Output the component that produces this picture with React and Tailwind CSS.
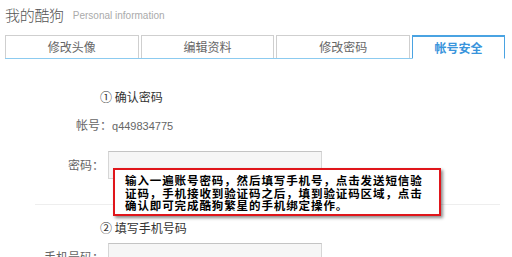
import React from "react";

const tabs = [
  { label: "修改头像" },
  { label: "编辑资料" },
  { label: "修改密码" },
  { label: "帐号安全", active: true },
];

const cjk = "font-['Noto_Sans_CJK_SC','Noto_Sans',sans-serif]";

function Field({ label, className = "" }) {
  return (
    <div className={`flex items-center ${className}`}>
      <span className="w-[108px] pr-[4px] text-right text-[12px] leading-[16px] text-[#666]">{label}</span>
      <div className="w-[214px] h-[28px] border border-[#d6d6d6] border-t-[#c4c4c4] bg-[#f6f6f6]" />
    </div>
  );
}

export default function App() {
  return (
    <div className={`relative w-[512px] h-[257px] overflow-hidden bg-white ${cjk}`}>
      {/* Header */}
      <div className="flex items-end pt-[5px] pl-[5px]">
        <h1 className="text-[15px] leading-[19px] font-light text-[#555] tracking-[-0.3px]">我的酷狗</h1>
        <span className="ml-[9px] mb-[1px] font-['Liberation_Sans',sans-serif] text-[10px] leading-[14px] text-[#aaa]">
          Personal information
        </span>
      </div>

      {/* Tabs */}
      <div className="mt-[11px] ml-[5px] w-[500px] flex gap-[2px] border-b border-[#8ccbf0]">
        {tabs.map((t) =>
          t.active ? (
            <div
              key={t.label}
              className="w-[93px] h-[24px] -mb-px flex items-center justify-center bg-white border-x border-t-2 border-[#4aa3e2] border-b border-b-white text-[12px] font-bold text-[#3a95dc]"
            >
              {t.label}
            </div>
          ) : (
            <div
              key={t.label}
              className="w-[134px] h-[23px] flex items-center justify-center border border-b-0 border-[#cfcfcf] text-[12px] text-[#666]"
            >
              {t.label}
            </div>
          )
        )}
      </div>

      {/* Step 1 */}
      <div className="mt-[30px] pl-[100px] text-[12px] leading-[16px] text-[#333]">① 确认密码</div>
      <div className="mt-[12px] pl-[76px] text-[12px] leading-[16px] text-[#666]">
        帐号：<span className="font-['Liberation_Sans',sans-serif] text-[11px]">q449834775</span>
      </div>
      <Field label="密码：" className="mt-[17px]" />

      <div className="mt-[25px] ml-[35px] w-[465px] h-px bg-[#eeeeee]" />

      {/* Step 2 */}
      <div className="mt-[15px] pl-[100px] text-[12px] leading-[16px] text-[#333]">② 填写手机号码</div>
      <Field label="手机号码：" className="mt-[7px]" />

      {/* Callout */}
      <div className="absolute left-[113px] top-[168px] w-[328px] h-[48px] bg-white border-2 border-[#e0161b] shadow-[2px_2px_3px_rgba(0,0,0,0.45)] pl-[10px] pt-[4px]">
        <p className="text-[11.5px] leading-[12.5px] font-bold text-black tracking-[0.9px]">
          输入一遍账号密码，然后填写手机号，点击发送短信验
          <br />
          证码，手机接收到验证码之后，填到验证码区域，点击
          <br />
          确认即可完成酷狗繁星的手机绑定操作。
        </p>
      </div>
    </div>
  );
}
